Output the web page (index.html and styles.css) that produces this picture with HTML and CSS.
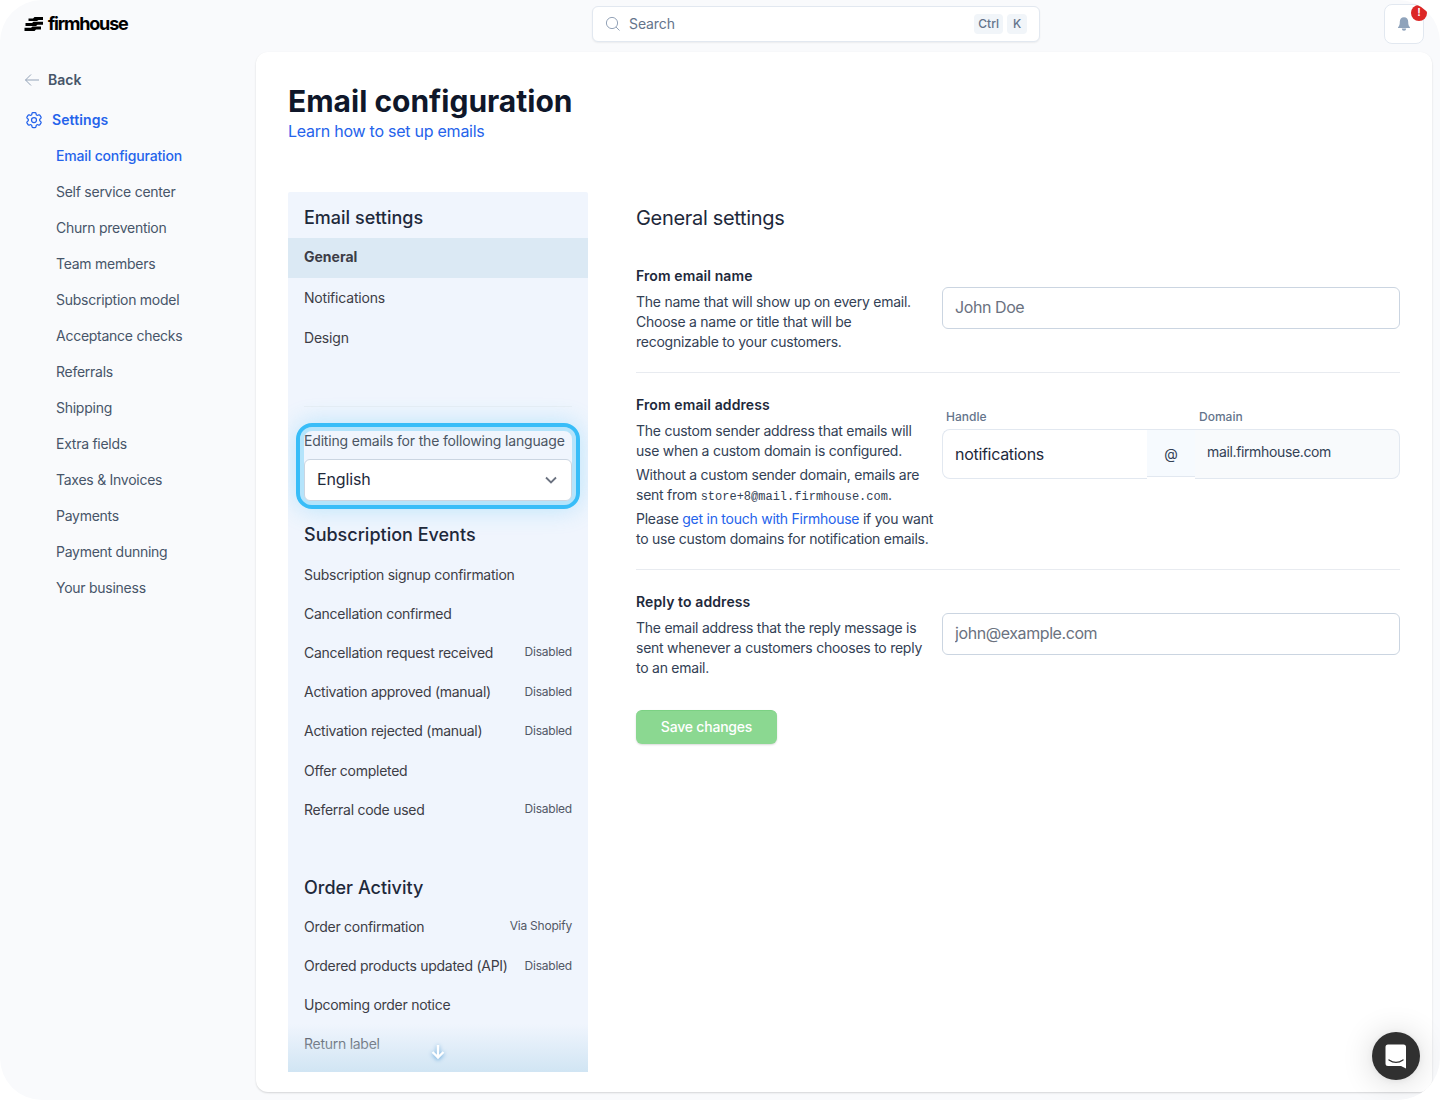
FILE: index.html
```html
<!DOCTYPE html>
<html lang="en">
<head>
  <meta charset="UTF-8" />
  <meta name="viewport" content="width=device-width, initial-scale=1.0"/>
  <title>Email configuration</title>
  <link rel="stylesheet" href="styles.css">
</head>
<body>
  <div class="app">
    <header class="topbar">
      <a class="logo">
        <svg width="20" height="16" viewBox="0 0 20 16"><path d="M4.500 2.500h4.500l1.500-1.500h8.500v3h-4.500L13 5H4.500zM1.500 7H8l1.500-1.200H19v3h-5.500L12 10H1.500zM.500 11.800H7l1.500-1.300H17v3h-5L10.500 15H.500z"/></svg>
        <span>firmhouse</span>
      </a>
      <div class="search">
        <svg width="16" height="16" viewBox="0 0 16 16"><circle cx="7" cy="7" r="5.600"/><path d="M11 11l3.500 3.500"/></svg>
        <span class="search-text">Search</span>
        <kbd>Ctrl</kbd>
        <kbd>K</kbd>
      </div>
      <div class="bell">
        <svg width="14" height="16" viewBox="0 0 14 16"><path d="M7 1.300C4.300 1.300 2.800 3.200 2.800 5.800c0 3-.5 4.200-1.600 5.200-.5.500-.2 1.100.4 1.100h10.800c.6 0 .9-.6.4-1.100-1.100-1-1.600-2.200-1.600-5.200 0-2.600-1.500-4.500-4.200-4.500z"/><path d="M4.800 12.500a2.200 2.200 0 0 0 4.400 0z"/></svg>
        <span class="badge">!</span>
      </div>
    </header>

    <div class="body">
      <nav class="sidebar">
        <a class="back"><svg width="16" height="16" viewBox="0 0 16 16"><path d="M15 8H1.500M7 2.500L1.500 8 7 13.500"/></svg>Back</a>
        <a class="section"><svg width="20" height="20" viewBox="0 0 24 24"><path d="M9.594 3.940c.09-.542.560-.940 1.110-.940h2.593c.550 0 1.020.398 1.110.940l.213 1.281c.063.374.313.686.645.870.074.040.147.083.220.127.325.196.720.257 1.075.124l1.217-.456a1.125 1.125 0 0 1 1.370.490l1.296 2.247a1.125 1.125 0 0 1-.260 1.431l-1.003.827c-.293.241-.438.613-.430.992a7.723 7.723 0 0 1 0 .255c-.008.378.137.750.430.991l1.004.827c.424.350.534.955.260 1.430l-1.298 2.247a1.125 1.125 0 0 1-1.369.491l-1.217-.456c-.355-.133-.750-.072-1.076.124a6.470 6.470 0 0 1-.220.128c-.331.183-.581.495-.644.869l-.213 1.281c-.090.543-.560.940-1.110.940h-2.594c-.550 0-1.019-.398-1.110-.940l-.213-1.281c-.062-.374-.312-.686-.644-.870a6.520 6.520 0 0 1-.220-.127c-.325-.196-.720-.257-1.076-.124l-1.217.456a1.125 1.125 0 0 1-1.369-.490l-1.297-2.247a1.125 1.125 0 0 1 .260-1.431l1.004-.827c.292-.240.437-.613.430-.991a6.932 6.932 0 0 1 0-.255c.007-.380-.138-.751-.430-.992l-1.004-.827a1.125 1.125 0 0 1-.260-1.430l1.297-2.247a1.125 1.125 0 0 1 1.370-.491l1.216.456c.356.133.751.072 1.076-.124.072-.044.146-.086.220-.128.332-.183.582-.495.644-.869z"/><circle cx="12" cy="12" r="3"/></svg>Settings</a>
        <ul>
          <li class="current">Email configuration</li>
          <li>Self service center</li>
          <li>Churn prevention</li>
          <li>Team members</li>
          <li>Subscription model</li>
          <li>Acceptance checks</li>
          <li>Referrals</li>
          <li>Shipping</li>
          <li>Extra fields</li>
          <li>Taxes &amp; Invoices</li>
          <li>Payments</li>
          <li>Payment dunning</li>
          <li>Your business</li>
        </ul>
      </nav>

      <main class="page">
        <h1>Email configuration</h1>
        <a class="learn">Learn how to set up emails</a>

        <div class="columns">
          <aside class="panel">
            <h3>Email settings</h3>
            <div class="tab active">General</div>
            <div class="tab">Notifications</div>
            <div class="tab">Design</div>
            <hr>
            <div class="language">
              <label>Editing emails for the following language</label>
              <div class="select">
                <span>English</span>
                <svg width="20" height="20" viewBox="0 0 20 20"><path d="M5 7.500l5 5 5-5"/></svg>
              </div>
            </div>

            <h3>Subscription Events</h3>
            <ul class="events">
              <li>Subscription signup confirmation</li>
              <li>Cancellation confirmed</li>
              <li>Cancellation request received <small>Disabled</small></li>
              <li>Activation approved (manual) <small>Disabled</small></li>
              <li>Activation rejected (manual) <small>Disabled</small></li>
              <li>Offer completed</li>
              <li>Referral code used <small>Disabled</small></li>
            </ul>

            <h3 class="order-title">Order Activity</h3>
            <ul class="events">
              <li>Order confirmation <small>Via Shopify</small></li>
              <li>Ordered products updated (API) <small>Disabled</small></li>
              <li>Upcoming order notice</li>
              <li>Return label</li>
            </ul>
            <div class="fade">
              <svg width="20" height="20" viewBox="0 0 20 20"><path d="M10 3v12M4.500 10L10 15.500 15.500 10"/></svg>
            </div>
          </aside>

          <section class="settings">
            <h2>General settings</h2>

            <div class="row">
              <div class="info">
                <h4>From email name</h4>
                <p>The name that will show up on every email.<br>Choose a name or title that will be<br>recognizable to your customers.</p>
              </div>
              <input class="name-input" type="text" placeholder="John Doe">
            </div>

            <div class="row">
              <div class="info">
                <h4>From email address</h4>
                <p>The custom sender address that emails will<br>use when a custom domain is configured.</p>
                <p>Without a custom sender domain, emails are<br>sent from <code>store+8@mail.firmhouse.com</code>.</p>
                <p>Please <a>get in touch with Firmhouse</a> if you want<br>to use custom domains for notification emails.</p>
              </div>
              <div class="address">
                <label>Handle</label><span></span><label>Domain</label>
                <div class="handle">notifications</div>
                <div class="at">@</div>
                <div class="domain">mail.firmhouse.com</div>
              </div>
            </div>

            <div class="row">
              <div class="info">
                <h4>Reply to address</h4>
                <p>The email address that the reply message is<br>sent whenever a customers chooses to reply<br>to an email.</p>
              </div>
              <input class="reply-input" type="email" placeholder="john@example.com">
            </div>

            <button type="submit">Save changes</button>
          </section>
        </div>
      </main>
    </div>
    <div class="chat">
      <svg width="24" height="26" viewBox="0 0 24 26"><path class="bubble" d="M4 1.500h15.500a2.500 2.500 0 0 1 2.500 2.500v21.500l-5-2.500H4A2.500 2.500 0 0 1 1.500 20.500V4A2.500 2.500 0 0 1 4 1.500z"/><path class="smile" d="M5 17q7 4.800 14 0"/></svg>
    </div>
  </div>
</body>
</html>
```
FILE: styles.css
```css
* {
  box-sizing: border-box;
}
body {
  margin: 0;
  background: #fff;
  font-family: Inter, "Liberation Sans", sans-serif;
  font-size: 14px;
  line-height: 20px;
  color: #334155;
  white-space: nowrap;
}
h1, h2, h3, h4, p, ul {
  margin: 0;
  padding: 0;
}
ul {
  list-style: none;
}
svg {
  flex: none;
  fill: none;
}
.app {
  position: relative;
  width: 1440px;
  height: 1100px;
  background: #f9fafc;
  border-radius: 42px;
  overflow: hidden;
}

/* top bar */
.topbar {
  display: flex;
  height: 52px;
  padding: 0 16px 0 24px;
}
.logo {
  display: flex;
  align-items: center;
  gap: 4px;
  width: 568px;
  height: 47px;
  color: #000;
  font-size: 18px;
  font-weight: 700;
  letter-spacing: -1.2px;
}
.logo svg {
  fill: #000;
}
.search {
  display: flex;
  align-items: center;
  width: 448px;
  height: 36px;
  margin-top: 6px;
  padding: 0 12px;
  background: #fff;
  border: 1px solid #e2e8f0;
  border-radius: 6px;
  box-shadow: 0 1px 2px rgba(0,0,0,0.06);
  color: #64748b;
}
.search svg {
  margin-right: 8px;
  stroke: #94a3b8;
}
.search-text {
  flex: 1;
  letter-spacing: -0.1px;
}
kbd {
  height: 20px;
  margin-left: 4px;
  padding: 0 4px;
  min-width: 20px;
  text-align: center;
  background: #f1f5f9;
  border-radius: 4px;
  font-family: inherit;
  font-size: 12px;
  font-weight: 500;
}
.bell {
  position: relative;
  display: flex;
  align-items: center;
  justify-content: center;
  width: 40px;
  height: 40px;
  margin: 4px 0 0 auto;
  background: #fff;
  border: 1px solid #e2e8f0;
  border-radius: 8px;
}
.bell svg {
  fill: #8fa3bb;
}
.badge {
  position: absolute;
  top: 0;
  right: -4px;
  width: 16px;
  height: 16px;
  background: #dc2626;
  border-radius: 50%;
  color: #fff;
  font-size: 11px;
  font-weight: 600;
  line-height: 15px;
  text-align: center;
}

/* left navigation */
.body {
  display: flex;
}
.sidebar {
  width: 256px;
  padding: 18px 24px;
  color: #475569;
}
.back, .section {
  display: flex;
  align-items: center;
  height: 20px;
  font-weight: 600;
}
.back {
  gap: 8px;
}
.back svg {
  stroke: #94a3b8;
}
.section {
  gap: 8px;
  margin: 20px 0 8px;
  color: #2563eb;
  letter-spacing: 0.1px;
}
.section svg {
  stroke: #2563eb;
  stroke-width: 1.5;
}
.sidebar li {
  height: 36px;
  padding-left: 32px;
  line-height: 36px;
  letter-spacing: -0.26px;
}
.sidebar .current {
  color: #2563eb;
  font-weight: 500;
  letter-spacing: -0.16px;
}

/* page card */
.page {
  width: 1176px;
  height: 1040px;
  padding: 31px 32px;
  background: #fff;
  border-radius: 12px;
  box-shadow: 0 1px 2px rgba(0,0,0,0.15);
}
h1 {
  color: #0f172a;
  font-size: 30px;
  line-height: 36px;
  font-weight: 700;
}
.learn {
  display: block;
  font-size: 16px;
  line-height: 24px;
  letter-spacing: -0.25px;
  color: #2563eb;
}
.columns {
  display: flex;
  gap: 48px;
  margin-top: 49px;
}
.panel {
  position: relative;
  width: 300px;
  height: 880px;
  background: #f0f5fd;
  border-radius: 2px 2px 0 0;
  overflow: hidden;
}
.panel h3 {
  padding: 12px 16px 6px;
  color: #1e293b;
  font-size: 18px;
  font-weight: 500;
  line-height: 28px;
}
.tab {
  height: 40px;
  margin-bottom: 0.5px;
  padding: 0 16px;
  line-height: 37px;
  letter-spacing: -0.2px;
  color: #3d3d46;
}
.tab.active {
  background: #dbe9f4;
  font-weight: 700;
  letter-spacing: 0;
}
.panel hr {
  height: 1px;
  margin: 46.5px 16px 16px;
  border: 0;
  background: #e8eef4;
}
.language {
  width: 284px;
  height: 86px;
  margin: 0 8px;
  padding: 4px 4px 0;
  border: 4px solid #38bdf8;
  border-radius: 16px;
  box-shadow: 0 0 24px rgba(56,189,248,0.3), inset 0 0 0 4px #b5e4fb;
}
.language label {
  display: block;
  height: 28px;
  color: #4b5563;
  letter-spacing: -0.17px;
}
.select {
  display: flex;
  align-items: center;
  justify-content: space-between;
  height: 42px;
  padding: 0 10px 0 12px;
  background: #fff;
  border: 1px solid #cbd5e1;
  border-radius: 6px;
  color: #1e293b;
  font-size: 16px;
  letter-spacing: -0.15px;
}
.select span {
  padding-bottom: 2px;
}
.select svg {
  stroke: #6b7280;
  stroke-width: 1.8;
}
.events li {
  display: flex;
  align-items: center;
  justify-content: space-between;
  height: 39.2px;
  padding: 1px 16px 0;
  color: #3d3d46;
  letter-spacing: -0.27px;
}
.events small {
  font-size: 12px;
  color: #525866;
  line-height: 18px;
  letter-spacing: -0.22px;
  padding-bottom: 1px;
}
.panel .order-title {
  padding-top: 45px;
  padding-bottom: 5px;
}
.fade {
  position: absolute;
  left: 0;
  bottom: 0;
  display: flex;
  justify-content: center;
  width: 300px;
  height: 48px;
  padding-top: 18px;
  background: linear-gradient(rgba(207,228,243,0), rgba(207,228,243,0.95));
}
.fade svg {
  stroke: #fff;
  stroke-width: 2.4;
  filter: drop-shadow(0 1px 2px #60a5da);
}

/* settings form */
.settings {
  width: 764px;
}
h2 {
  height: 74px;
  padding-top: 12px;
  color: #1e293b;
  font-size: 20px;
  font-weight: 400;
  line-height: 28px;
  letter-spacing: -0.32px;
}
.row {
  display: grid;
  grid-template-columns: 306px 458px;
  align-items: start;
  padding-bottom: 20px;
  margin-bottom: 22px;
  border-bottom: 1px solid #e8ebf0;
}
.row:last-of-type {
  margin-bottom: 12px;
  border: 0;
}
h4 {
  margin-bottom: 6px;
  color: #1e293b;
  font-size: 14px;
  font-weight: 600;
  letter-spacing: 0.1px;
}
.info p {
  letter-spacing: -0.25px;
}
.info p + p {
  margin-top: 4px;
}
.info a {
  color: #2563eb;
}
code {
  font-family: "Liberation Mono", monospace;
  font-size: 12px;
  line-height: 16px;
  letter-spacing: 0;
}
input {
  width: 458px;
  height: 42px;
  margin-top: 21px;
  padding: 0 12px 2px;
  border: 1px solid #cbd5e1;
  border-radius: 6px;
  font-family: inherit;
  font-size: 16px;
  letter-spacing: -0.42px;
}
input::placeholder {
  color: #6b7280;
}
.address {
  display: grid;
  grid-template-columns: 205px 48px 205px;
  align-items: start;
  margin-top: 12px;
}
.address label {
  height: 22px;
  padding-left: 4px;
  color: #64748b;
  font-size: 12px;
  font-weight: 500;
}
.handle, .at, .domain {
  height: 50px;
  border: 1px solid #e2e8f0;
}
.handle {
  padding-left: 12px;
  border-right: 0;
  border-radius: 8px 0 0 8px;
  color: #1e293b;
  font-size: 16px;
  line-height: 48px;
  letter-spacing: -0.3px;
}
.at {
  height: 48px;
  border-width: 1px 0;
  background: #f6fafe;
  line-height: 48px;
  text-align: center;
}
.domain {
  padding-left: 12px;
  border-left: 0;
  border-radius: 0 8px 8px 0;
  background: #f8fafc;
  line-height: 43px;
  letter-spacing: -0.36px;
}
button {
  width: 141px;
  height: 34px;
  padding-bottom: 3px;
  border: 0;
  border-top: 1px solid #7bd183;
  border-radius: 6px;
  background: #8bd891;
  box-shadow: 0 1px 2px rgba(0,0,0,0.15);
  color: #fff;
  font-family: inherit;
  font-size: 14px;
  font-weight: 500;
  letter-spacing: -0.2px;
}

/* chat launcher */
.chat {
  position: absolute;
  right: 20px;
  bottom: 20px;
  display: flex;
  align-items: center;
  justify-content: center;
  width: 48px;
  height: 48px;
  border-radius: 50%;
  background: #303030;
  box-shadow: 0 1px 6px rgba(0,0,0,0.06), 0 2px 32px rgba(0,0,0,0.16);
}
.bubble {
  fill: #fff;
}
.smile {
  stroke: #303030;
  stroke-width: 1.4;
  stroke-linecap: round;
}
```
